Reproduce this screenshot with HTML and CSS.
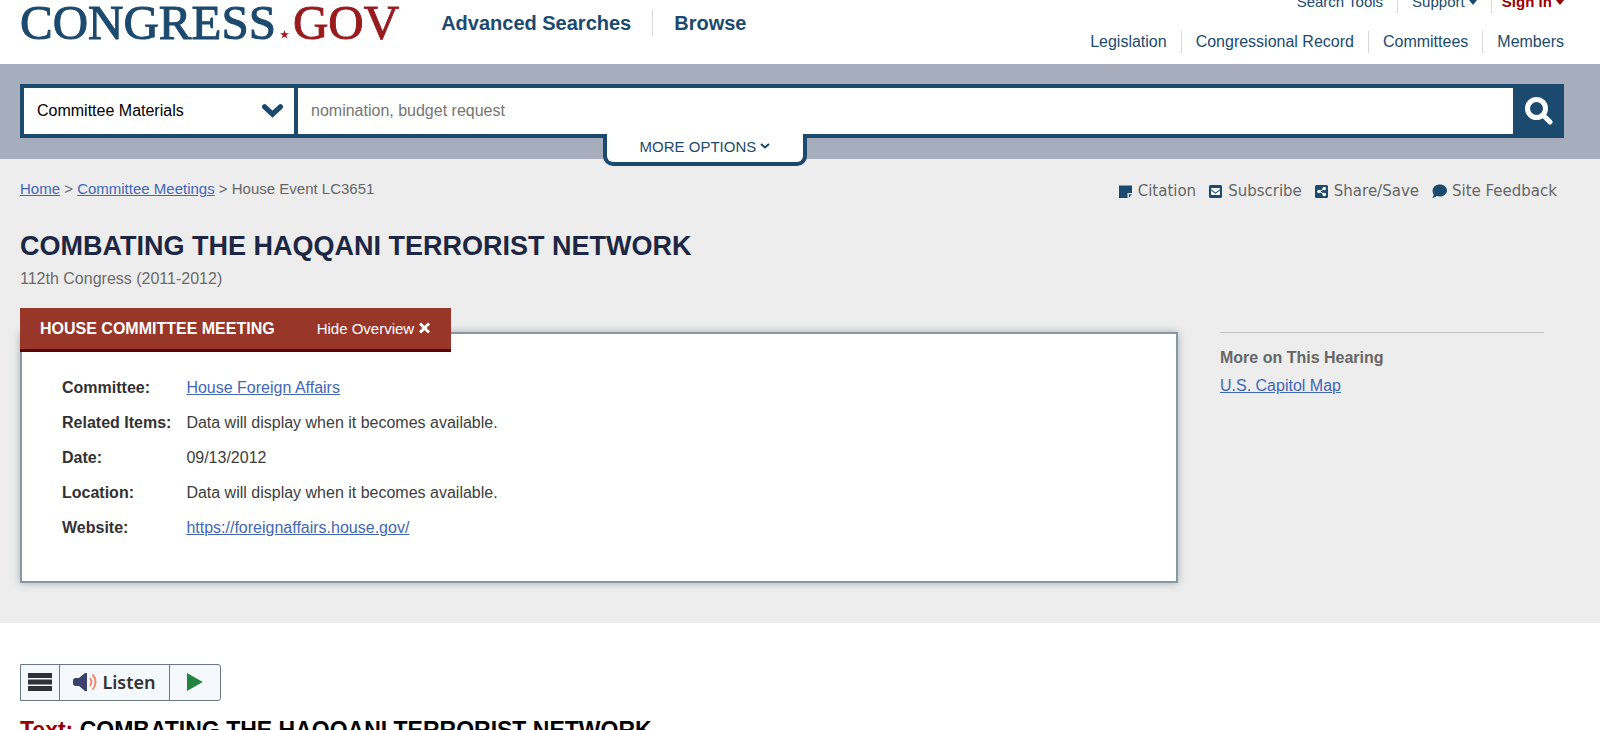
FILE: index.html
```html
<!DOCTYPE html>
<html lang="en">
<head>
    <meta charset="UTF-8">
    <meta name="viewport" content="width=device-width, initial-scale=1.0">
    <title>COMBATING THE HAQQANI TERRORIST NETWORK | Congress.gov</title>
    <link rel="stylesheet" href="styles.css">
</head>
<body>
    <header class="header">
        <a class="logo" href="#" aria-label="Congress.gov">
            <span>CONGRESS</span>
            <svg class="logo-star" viewBox="0 0 20 20"><path d="M10 0l2.400 7.200H20l-6.100 4.500 2.300 7.300-6.200-4.500-6.200 4.500 2.300-7.300L0 7.200h7.600z"/></svg>
            <span class="logo-gov">GOV</span>
        </a>
        <nav class="main-nav">
            <a href="#">Advanced Searches</a>
            <a href="#">Browse</a>
        </nav>
        <div class="side-navs">
            <nav class="nav-list nav-tools">
                <a href="#">Search Tools</a>
                <a href="#">Support <span class="caret"></span></a>
                <a class="sign-in" href="#">Sign In <span class="caret"></span></a>
            </nav>
            <nav class="nav-list">
                <a href="#">Legislation</a>
                <a href="#">Congressional Record</a>
                <a href="#">Committees</a>
                <a href="#">Members</a>
            </nav>
        </div>
    </header>

    <!-- Search bar -->
    <div class="search-bar">
        <form class="search-form">
            <div class="select-wrap">
                <select class="search-source" aria-label="Search in">
                    <option>Committee Materials</option>
                </select>
                <svg class="select-arrow" viewBox="0 0 20 14"><path d="M2.500 3.500l7.500 7 7.500-7"/></svg>
            </div>
            <input class="search-input" type="text" placeholder="nomination, budget request" aria-label="Search terms">
            <button class="search-button" type="submit" aria-label="Search">
                <svg viewBox="0 0 28 28"><circle cx="11.500" cy="11.500" r="9"/><path d="M18.500 18.500l6.500 6.500"/></svg>
            </button>
            <button class="more-options" type="button">MORE OPTIONS
                <svg viewBox="0 0 10 8"><path d="M1 2l4 3.500L9 2"/></svg>
            </button>
        </form>
    </div>

    <main>
        <section class="overview">
            <div class="top-row">
                <nav class="breadcrumb">
                    <a href="#">Home</a> &gt; <a href="#">Committee Meetings</a> &gt; House Event LC3651
                </nav>
                <div class="page-tools">
                    <a href="#">
                        <svg viewBox="0 0 14 14"><path d="M0 1.500h13v7.500H8.500V14H0z"/><path d="M9.800 10.300H13L9.800 13.500z"/></svg>
                        Citation
                    </a>
                    <a href="#">
                        <svg viewBox="0 0 14 14"><rect y="1" width="13" height="13" rx="1.500"/><path class="cut" d="M2 4h9v1.200L6.500 8.500 2 5.200z"/><path class="cut" d="M2 6.500l4.500 3.300L11 6.500V11H2z"/></svg>
                        Subscribe
                    </a>
                    <a href="#">
                        <svg viewBox="0 0 14 14"><rect y="1" width="13" height="13" rx="1.500"/><path class="cut-line" d="M9.500 4.500l-5 3 5 3"/><circle class="cut" cx="9.300" cy="4.500" r="1.800"/><circle class="cut" cx="4" cy="7.500" r="1.800"/><circle class="cut" cx="9.300" cy="10.500" r="1.800"/></svg>
                        Share/Save
                    </a>
                    <a href="#">
                        <svg class="wide" viewBox="0 0 15 14"><path d="M7.800.5c4 0 7.200 2.700 7.200 6s-3.200 6-7.200 6c-1.100 0-2.100-.2-3-.5C3.500 13 1.900 13.800.2 13.800c.8-.9 1.400-2.100 1.500-3.300C.9 9.400.6 8 .6 6.500c0-3.300 3.200-6 7.200-6z"/></svg>
                        Site Feedback
                    </a>
                </div>
            </div>

            <h1>COMBATING THE HAQQANI TERRORIST NETWORK</h1>
            <p class="congress">112th Congress (2011-2012)</p>

            <div class="columns">
                <div class="meeting">
                    <div class="meeting-tab">
                        <h2>HOUSE COMMITTEE MEETING</h2>
                        <button type="button">Hide Overview
                            <svg viewBox="0 0 12 12"><path d="M1.500 1.500l9 9M10.500 1.500l-9 9"/></svg>
                        </button>
                    </div>
                    <div class="meeting-box">
                        <table>
                            <tr><th scope="row">Committee:</th><td><a href="#">House Foreign Affairs</a></td></tr>
                            <tr><th scope="row">Related Items:</th><td>Data will display when it becomes available.</td></tr>
                            <tr><th scope="row">Date:</th><td>09/13/2012</td></tr>
                            <tr><th scope="row">Location:</th><td>Data will display when it becomes available.</td></tr>
                            <tr><th scope="row">Website:</th><td><a href="#">https://foreignaffairs.house.gov/</a></td></tr>
                        </table>
                    </div>
                </div>
                <aside class="related">
                    <h3>More on This Hearing</h3>
                    <a href="#">U.S. Capitol Map</a>
                </aside>
            </div>
        </section>

        <section class="content">
            <!-- Read aloud toolbar -->
            <div class="listen">
                <button class="listen-menu" type="button" aria-label="Menu">
                    <svg viewBox="0 0 24 18"><path d="M0 0h24v5H0zM0 6.500h24v5H0zM0 13h24v5H0z"/></svg>
                </button>
                <button class="listen-main" type="button">
                    <svg viewBox="0 0 24 18"><path class="speaker" d="M2 5h4l6-5h2v18h-2l-6-5H2L0 11.500v-5z"/><path class="wave" d="M17 5c1.800 2.500 1.800 5.500 0 8M19.500 1.500c4 4.500 4 10.500 0 15"/></svg>
                    Listen
                </button>
                <button class="listen-play" type="button" aria-label="Play">
                    <svg viewBox="0 0 14 16"><path d="M0 0l14 8-14 8z"/></svg>
                </button>
            </div>
            <h2 class="text-title"><span>Text:</span> COMBATING THE HAQQANI TERRORIST NETWORK</h2>
        </section>
    </main>
</body>
</html>
```

FILE: styles.css
```css
* {
    box-sizing: border-box;
}

body {
    margin: 0;
    height: 100vh;
    overflow: hidden;
    font-family: "Liberation Sans", Arial, sans-serif;
    font-size: 16px;
    line-height: 20px;
    color: #3d3d3d;
    background-color: #fff;
}

h1, h2, h3, p {
    margin: 0;
}

a {
    color: #4267b5;
}

button {
    font-family: inherit;
    cursor: pointer;
}

/* Header */
.header {
    display: flex;
    align-items: flex-start;
    height: 64px;
    padding: 0 36px 0 20px;
}

.header a {
    color: #1c4a6e;
    text-decoration: none;
}

.logo {
    display: flex;
    align-items: flex-end;
    height: 46px;
    font-family: "Liberation Serif", "Times New Roman", serif;
    font-size: 49px;
    line-height: 46px;
    -webkit-text-stroke: 1px currentColor;
}

.logo-star {
    width: 9px;
    height: 9px;
    margin: 0 4px 7px;
    fill: #a3161d;
}

.logo-gov {
    color: #981b1e;
}

.main-nav {
    display: flex;
    align-items: center;
    height: 26px;
    margin: 10px 0 0 42px;
    font-size: 20px;
    font-weight: bold;
}

.main-nav a + a {
    margin-left: 21px;
    padding-left: 21px;
    border-left: 1px solid #d6d7d9;
    line-height: 26px;
}

.side-navs {
    display: flex;
    flex-direction: column;
    align-items: flex-end;
    gap: 18px;
    margin: -9px 0 0 auto;
}

.nav-list {
    display: flex;
    line-height: 22px;
}

.nav-list a + a {
    margin-left: 14px;
    padding-left: 14px;
    border-left: 1px solid #d6d7d9;
}

.nav-tools {
    font-size: 15px;
}

.header .sign-in {
    padding-left: 10px;
    color: #900;
    font-weight: bold;
}

.caret {
    display: inline-block;
    border: 4px solid transparent;
    border-top: 5px solid currentColor;
    border-bottom: 0;
    vertical-align: 2px;
}

/* Search bar */
.search-bar {
    padding: 20px 36px 21px 20px;
    background-color: #a6adbd;
}

.search-form {
    position: relative;
    display: flex;
    height: 54px;
    border: 4px solid #1c4a6e;
    border-right: 0;
    background-color: #fff;
}

.select-wrap {
    position: relative;
    display: flex;
    width: 274px;
    border-right: 4px solid #1c4a6e;
}

.search-source {
    flex: 1;
    padding: 0 13px;
    border: 0;
    appearance: none;
    background: none;
    font: inherit;
    color: #000;
}

.select-arrow {
    position: absolute;
    right: 11px;
    top: 15px;
    width: 21px;
    height: 15px;
    pointer-events: none;
    fill: none;
    stroke: #1c4a6e;
    stroke-width: 5;
    stroke-linecap: round;
}

.search-input {
    flex: 1;
    padding: 0 13px;
    border: 0;
    font: inherit;
    color: #000;
}

.search-input::placeholder {
    color: #757575;
}

.search-button {
    width: 51px;
    padding: 0;
    border: 0;
    background-color: #1c4a6e;
}

.search-button svg {
    display: block;
    width: 28px;
    height: 28px;
    margin: auto;
    fill: none;
    stroke: #fff;
    stroke-width: 5;
    stroke-linecap: round;
}

.more-options {
    position: absolute;
    left: 37.600%;
    top: 46px;
    width: 204px;
    height: 32px;
    padding: 0 0 3px;
    border: 4px solid #1c4a6e;
    border-top: 0;
    border-radius: 0 0 10px 10px;
    background-color: #fff;
    font-size: 15px;
    color: #1c4a6e;
}

.more-options svg {
    width: 10px;
    height: 8px;
    fill: none;
    stroke: #1c4a6e;
    stroke-width: 2;
    vertical-align: 2px;
}

/* Overview */
.overview {
    padding: 20px 36px 40px 20px;
    background-color: #ededed;
}

.top-row {
    display: flex;
    justify-content: space-between;
}

.breadcrumb {
    font-size: 15px;
    color: #666;
}

.page-tools {
    display: flex;
    gap: 13px;
    padding: 2px 7px 0 0;
    font-family: "DejaVu Sans", Verdana, sans-serif;
    font-size: 15px;
}

.page-tools a {
    display: flex;
    align-items: center;
    gap: 5px;
    color: #666;
    text-decoration: none;
}

.page-tools svg {
    width: 14px;
    height: 14px;
    fill: #1c4a6e;
}

.page-tools .wide {
    width: 15px;
}

.page-tools .cut {
    fill: #fff;
}

.page-tools .cut-line {
    fill: none;
    stroke: #fff;
}

h1 {
    margin-top: 29px;
    font-size: 27px;
    line-height: 32px;
    color: #1d2743;
}

.congress {
    margin-top: 7px;
    color: #6b6b6b;
}

.columns {
    display: flex;
    margin-top: 19px;
}

.meeting {
    flex: 1;
}

.meeting-tab {
    position: relative;
    display: flex;
    align-items: center;
    gap: 42px;
    width: fit-content;
    height: 44px;
    padding: 0 20px;
    border-bottom: 3px solid #5a0505;
    background-color: #983629;
    color: #fff;
}

.meeting-tab h2 {
    font-size: 16px;
}

.meeting-tab button {
    padding: 0;
    border: 0;
    background: none;
    font-size: 15px;
    color: #fff;
}

.meeting-tab svg {
    width: 13px;
    height: 12px;
    fill: none;
    stroke: #fff;
    stroke-width: 3;
}

/* The tab overlaps the top edge of the box */
.meeting-box {
    margin-top: -20px;
    padding: 36px 40px;
    border: 2px solid #8798a3;
    background-color: #fff;
    box-shadow: 0 0 8px rgba(60, 80, 100, 0.4);
}

table {
    border-collapse: collapse;
}

th, td {
    height: 35px;
    padding: 0;
    text-align: left;
    vertical-align: middle;
}

th {
    padding-right: 15px;
    color: #323232;
}

.related {
    width: 324px;
    margin: 24px 20px 0 42px;
    padding-top: 15px;
    border-top: 1px solid #c4c7c9;
}

.related h3 {
    margin-bottom: 8px;
    font-size: 16px;
    line-height: 20px;
    color: #666;
}

/* Content */
.content {
    padding: 41px 20px;
}

.listen {
    display: flex;
    width: fit-content;
    height: 37px;
    border: 1px solid #6b7785;
    border-radius: 0 3px 3px 0;
    background-color: #f5f8fc;
}

.listen button {
    display: flex;
    align-items: center;
    justify-content: center;
    gap: 5px;
    padding: 0 0 1px;
    border: 0;
    background: none;
    font-family: "Noto Sans", sans-serif;
    font-size: 18px;
    font-weight: 600;
    color: #333;
}

.listen button + button {
    border-left: 1px solid #6b7785;
}

.listen .listen-menu {
    width: 38px;
}

.listen .listen-main {
    width: 110px;
}

.listen .listen-play {
    width: 51px;
}

.listen svg {
    height: 18px;
}

.listen-menu path {
    fill: #2d3337;
}

.listen .speaker {
    fill: #3b4168;
}

.listen .wave {
    fill: none;
    stroke: #ee8a6c;
    stroke-width: 2;
}

.listen-play path {
    fill: #23843f;
}

.text-title {
    margin-top: 15px;
    font-size: 23px;
    line-height: 28px;
    color: #000;
}

.text-title span {
    color: #900;
}
```
